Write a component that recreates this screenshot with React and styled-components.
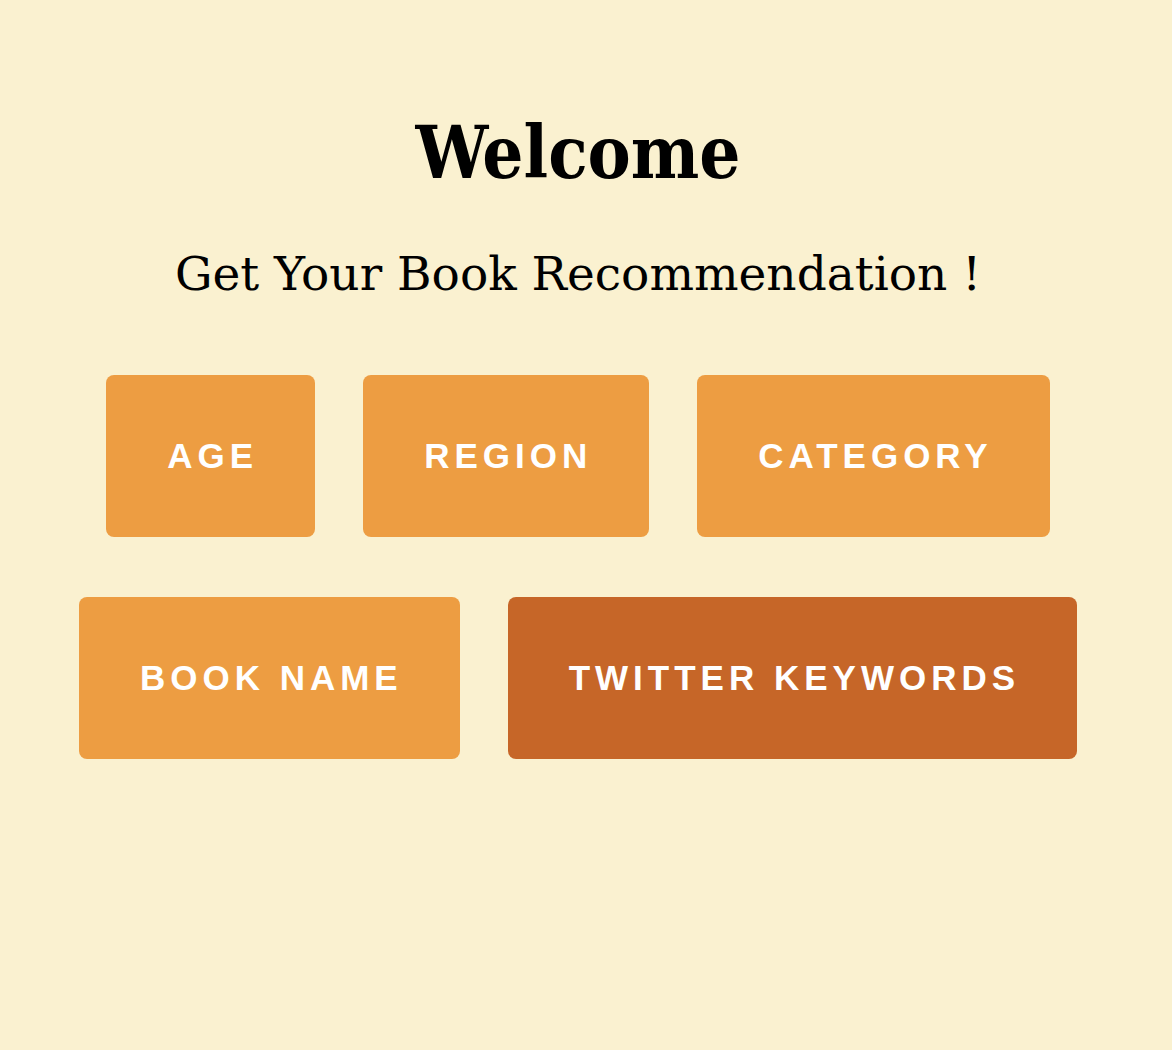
import styled, { createGlobalStyle } from "styled-components";

const GlobalStyle = createGlobalStyle`
  html, body {
    margin: 0;
    padding: 0;
    background: #faf1d0;
  }
`;

const Page = styled.div`
  min-height: 1050px;
  box-sizing: border-box;
  padding: 0 16px 0 0;
  display: flex;
  flex-direction: column;
  align-items: center;
`;

const Title = styled.h1`
  margin: 108px 0 0;
  font-family: "DejaVu Serif Condensed", "DejaVu Serif", serif;
  font-weight: bold;
  font-size: 72px;
  line-height: 90px;
  color: #000;
`;

const Subtitle = styled.h2`
  margin: 48px 0 0;
  font-family: "DejaVu Serif", serif;
  font-weight: normal;
  font-size: 47px;
  line-height: 56px;
  color: #000;
`;

const Row = styled.div`
  display: flex;
  justify-content: center;
  gap: 48px;
  margin-top: ${(p) => p.$top}px;
`;

const Choice = styled.button`
  height: 162px;
  padding: 0 57px 0 61px;
  border: none;
  border-radius: 8px;
  background: ${(p) => (p.$active ? "#c66628" : "#ed9d42")};
  color: #fff;
  font-family: "Liberation Sans", Arial, sans-serif;
  font-weight: bold;
  font-size: 35px;
  letter-spacing: 5px;
  cursor: pointer;
`;

export default function App() {
  return (
    <>
      <GlobalStyle />
      <Page>
        <Title>Welcome</Title>
        <Subtitle>Get Your Book Recommendation !</Subtitle>
        <Row $top={73}>
          <Choice>AGE</Choice>
          <Choice>REGION</Choice>
          <Choice>CATEGORY</Choice>
        </Row>
        <Row $top={60}>
          <Choice>BOOK NAME</Choice>
          <Choice $active>TWITTER KEYWORDS</Choice>
        </Row>
      </Page>
    </>
  );
}
